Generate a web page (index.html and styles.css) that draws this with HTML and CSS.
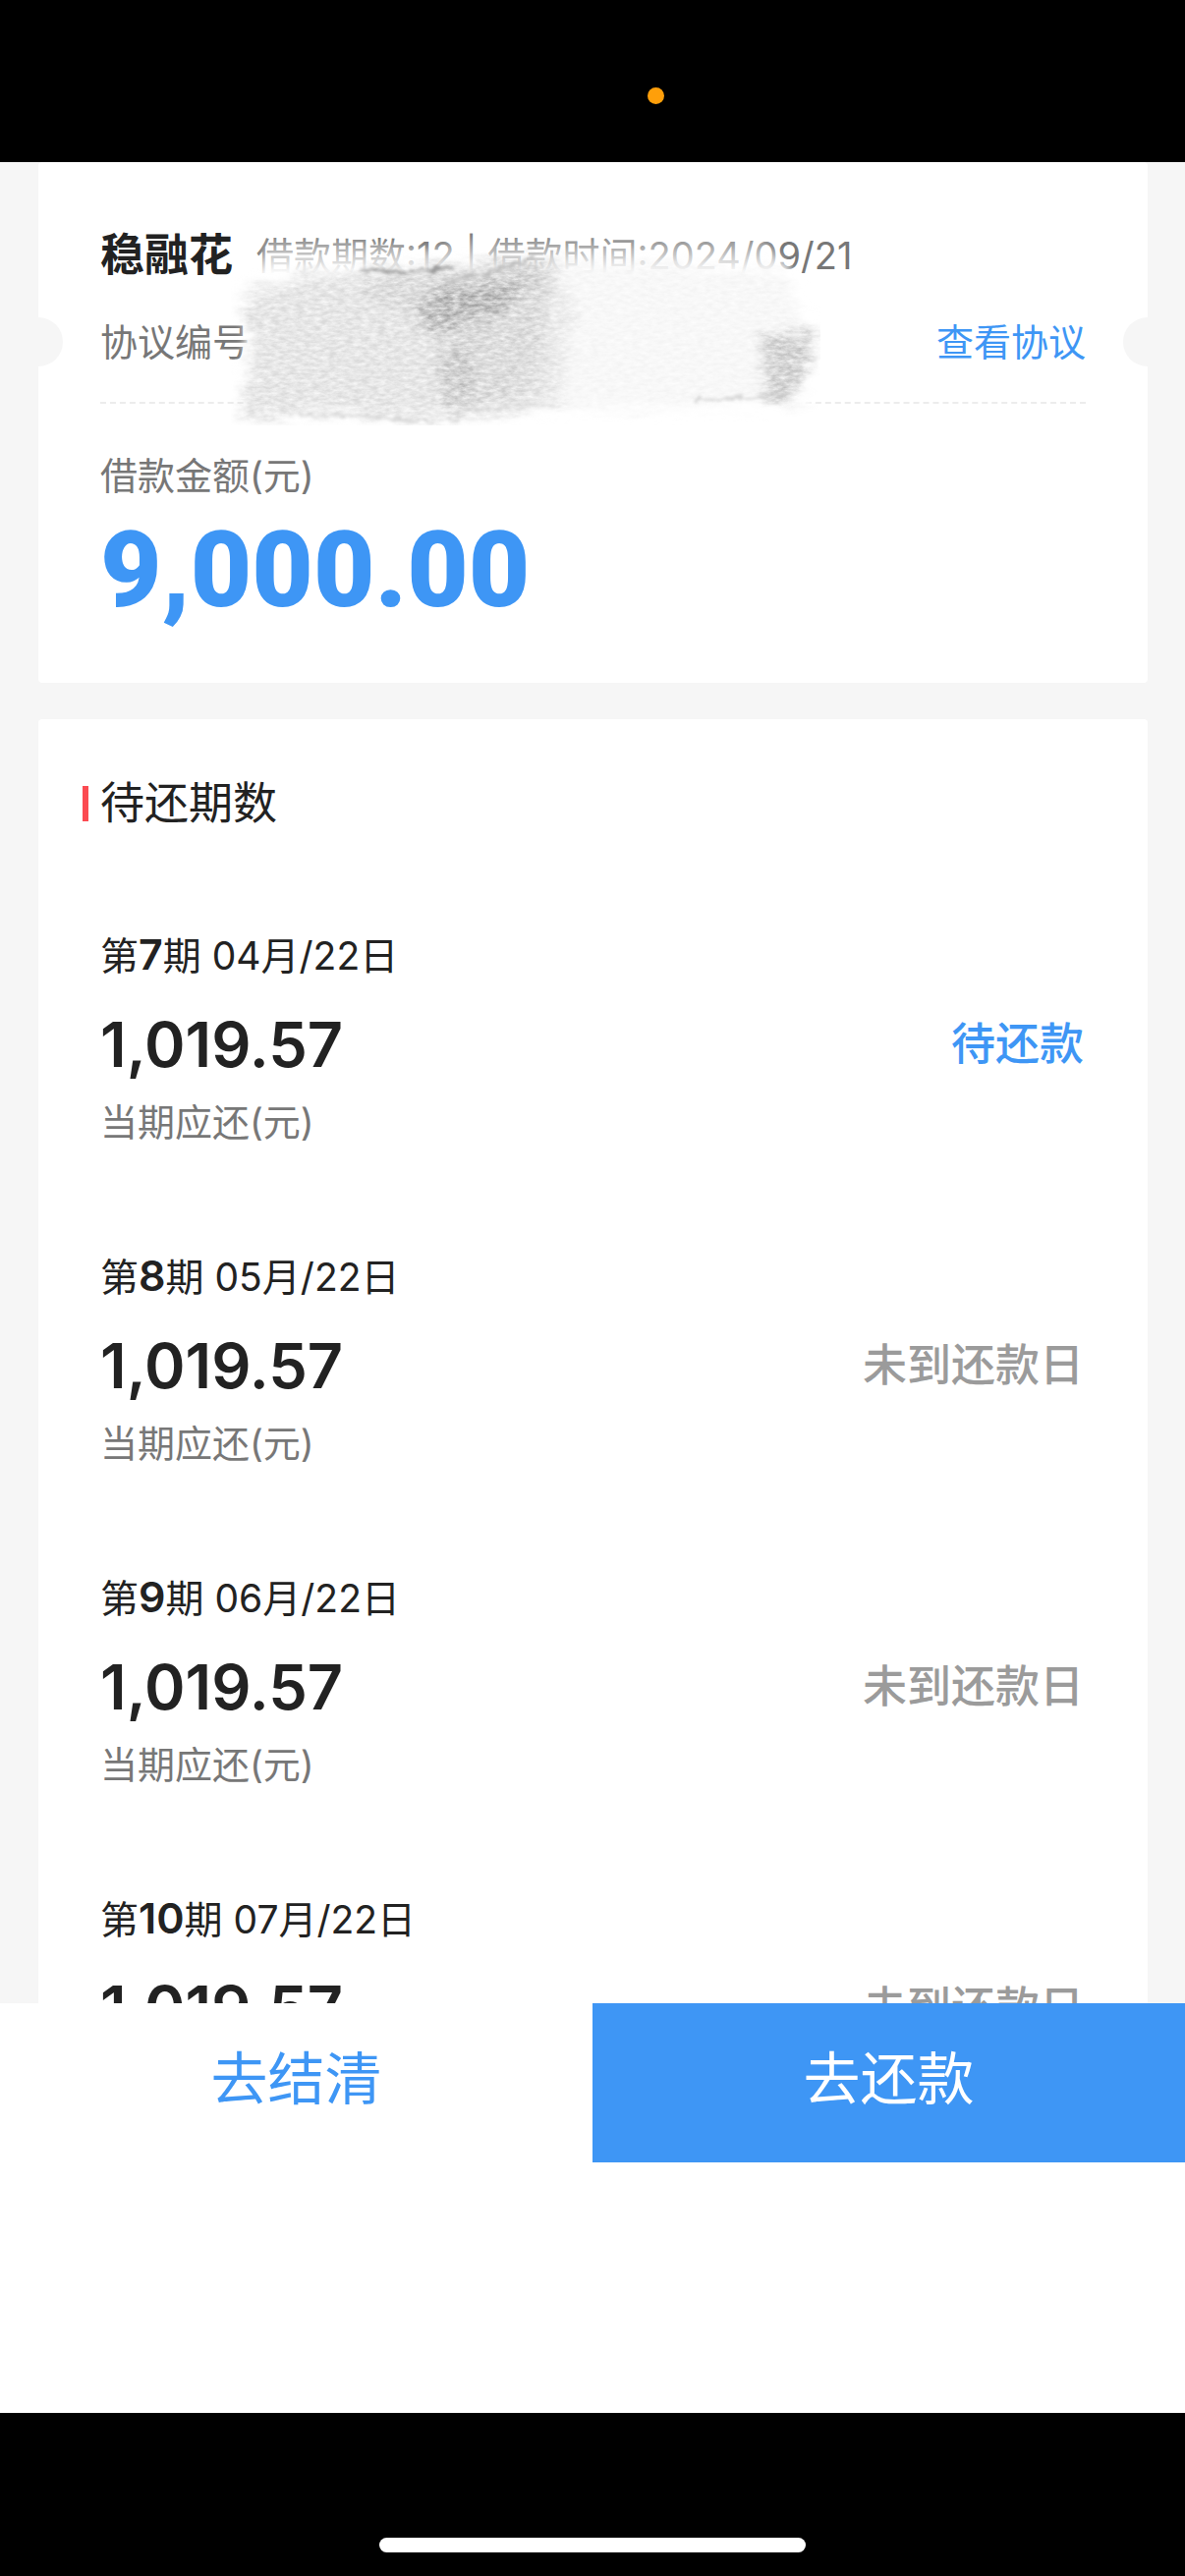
FILE: index.html
```html
<!DOCTYPE html>
<html lang="zh-CN">
  <head>
    <meta charset="UTF-8" />
    <meta name="viewport" content="width=device-width, initial-scale=1.0" />
    <title>借款详情</title>
    <link rel="stylesheet" href="styles.css">
  </head>

  <body>
    <div class="status-bar"><span class="mic-dot"></span></div>

    <main class="content">
      <section class="card loan">
        <div class="loan-head">
          <h1>稳融花</h1>
          <span class="loan-meta">借款期数:12 | 借款时间:2024/09/21</span>
        </div>
        <div class="loan-number">
          <span>协议编号:</span>
          <a href="#agreement">查看协议</a>
        </div>
        <div class="loan-label">借款金额(元)</div>
        <div class="loan-amount">9,000.00</div>

        <!-- hides the agreement number -->
        <svg class="smudge" viewBox="0 0 600 200" aria-hidden="true">
          <defs>
            <linearGradient id="fade" x1="0" y1="0" x2="0" y2="1">
              <stop offset="0" stop-color="#fff" stop-opacity="0" />
              <stop offset="0.22" stop-color="#fff" />
              <stop offset="1" stop-color="#fff" />
            </linearGradient>
            <filter id="soft" x="-10%" y="-30%" width="120%" height="160%">
              <feGaussianBlur stdDeviation="4" />
            </filter>
            <filter id="chalk" x="-5%" y="-15%" width="110%" height="130%">
              <feTurbulence type="fractalNoise" baseFrequency="0.03 0.08" numOctaves="3" seed="4" result="wave" />
              <feTurbulence type="fractalNoise" baseFrequency="0.12 0.3" numOctaves="4" seed="9" result="noise" />
              <feGaussianBlur in="SourceGraphic" stdDeviation="7" result="blurred" />
              <feDisplacementMap in="blurred" in2="wave" scale="24" xChannelSelector="R" yChannelSelector="G" result="rough" />
              <feColorMatrix in="noise" type="matrix" values="0 0 0 0 0  0 0 0 0 0  0 0 0 0 0  1.2 0 0 0 0.05" result="grain" />
              <feComposite in="rough" in2="grain" operator="in" />
            </filter>
            <filter id="edge" x="-5%" y="-40%" width="110%" height="180%">
              <feTurbulence type="fractalNoise" baseFrequency="0.12" numOctaves="3" seed="2" result="noise" />
              <feDisplacementMap in="SourceGraphic" in2="noise" scale="10" result="rough" />
              <feGaussianBlur in="rough" stdDeviation="1.5" />
            </filter>
          </defs>
          <path fill="url(#fade)" filter="url(#soft)" d="M36 8 L130 10 L200 20 L260 2 L340 2 L540 6 L568 40 L590 90 L590 180 L540 194 L20 195 L14 100 Z" />
          <g filter="url(#chalk)">
            <path fill="#dadada" d="M10 66 L70 48 L140 46 L330 30 L348 80 L334 180 L220 194 L80 188 L8 196 L22 130 Z" />
            <path fill="#ededed" d="M325 32 L560 42 L584 90 L566 172 L440 184 L330 180 Z" opacity="0.6" />
            <path fill="#c6c6c6" d="M132 40 L225 40 L330 28 L322 60 L320 100 L316 130 L300 166 L226 188 L216 120 L200 90 L140 70 Z" opacity="0.7" />
            <path fill="#8c8c8c" d="M186 76 L230 60 L304 44 L284 80 L240 96 L200 106 Z" opacity="0.7" />
            <path fill="#a8a8a8" d="M210 128 L250 118 L240 170 L222 188 Z" opacity="0.6" />
            <path fill="#999" d="M540 108 L598 104 L584 140 L576 176 L544 174 Z" opacity="0.6" />
          </g>
          <g filter="url(#edge)" fill="none" stroke="#bdbdbd" stroke-width="3">
            <path stroke="#8c8c8c" d="M132 42 L180 44 L226 39" opacity="0.8" />
            <path d="M216 54 L262 44 L312 28" />
            <path d="M70 190 L130 190 L206 196" opacity="0.5" />
            <path d="M222 196 L240 184 L328 178" opacity="0.4" />
            <path d="M470 174 L520 172 L572 168" opacity="0.6" />
          </g>
        </svg>
      </section>

      <section class="card plan">
        <h2>待还期数</h2>
        <ul class="periods">
          <li>
            <div class="date">第<b>7</b>期 04月/22日</div>
            <div class="row">
              <span class="amount">1,019.57</span>
              <span class="state due">待还款</span>
            </div>
            <div class="note">当期应还(元)</div>
          </li>
          <li>
            <div class="date">第<b>8</b>期 05月/22日</div>
            <div class="row">
              <span class="amount">1,019.57</span>
              <span class="state">未到还款日</span>
            </div>
            <div class="note">当期应还(元)</div>
          </li>
          <li>
            <div class="date">第<b>9</b>期 06月/22日</div>
            <div class="row">
              <span class="amount">1,019.57</span>
              <span class="state">未到还款日</span>
            </div>
            <div class="note">当期应还(元)</div>
          </li>
          <li>
            <div class="date">第<b>10</b>期 07月/22日</div>
            <div class="row">
              <span class="amount">1,019.57</span>
              <span class="state">未到还款日</span>
            </div>
          </li>
        </ul>
      </section>
    </main>

    <footer class="actions">
      <button type="button" class="settle">去结清</button>
      <button type="button" class="repay">去还款</button>
    </footer>

    <div class="home-bar"><span></span></div>
  </body>
</html>
```

FILE: styles.css
```css
* {
  box-sizing: border-box;
}

body {
  margin: 0;
  height: 100vh;
  display: flex;
  flex-direction: column;
  overflow: hidden;
  background: #fff;
  color: #222;
  font-family: Inter, "Noto Sans CJK SC", sans-serif;
  font-size: 39px;
  line-height: 60px;
}

h1,
h2,
ul {
  margin: 0;
  padding: 0;
}

.status-bar {
  flex: none;
  height: 165px;
  padding: 30px 0 0 129px;
  display: flex;
  align-items: center;
  justify-content: center;
  background: #000;
}

.mic-dot {
  width: 17px;
  height: 17px;
  border-radius: 50%;
  background: #ff9f0a;
}

.content {
  flex: 1;
  min-height: 0;
  overflow: hidden;
  padding: 0 38px 0 39px;
  background: #f6f6f6;
}

.card {
  padding: 0 63px;
  border-radius: 4px;
  background: #fff;
}

.loan {
  position: relative;
  height: 530px;
  padding-top: 65px;
  margin-bottom: 37px;
}

/* ticket notches */
.loan::before,
.loan::after {
  content: "";
  position: absolute;
  top: 158px;
  width: 50px;
  height: 50px;
  border-radius: 50%;
  background: #f6f6f6;
}

.loan::before {
  left: -25px;
}

.loan::after {
  right: -25px;
}

.loan-head {
  display: flex;
  align-items: center;
  gap: 24px;
}

.loan-head h1 {
  font-size: 45px;
  font-weight: 700;
}

.loan-meta,
.loan-label,
.note {
  color: #777;
}

.loan-meta,
.loan-label,
.loan-number,
.note {
  font-size: 38px;
}

.loan-number {
  display: flex;
  justify-content: space-between;
  padding: 28px 0 31px;
  border-bottom: 2px dashed #ececec;
  color: #777;
}

.loan-number a {
  color: #3e96f5;
  text-decoration: none;
}

.loan-label {
  margin-top: 43px;
}

.loan-amount {
  color: #3e96f5;
  font-family: Roboto, sans-serif;
  font-size: 108px;
  font-weight: 900;
  line-height: 132px;
}

.smudge {
  position: absolute;
  top: 68px;
  left: 196px;
  width: 600px;
  height: 200px;
}

.plan {
  padding-top: 56px;
}

.plan h2 {
  display: flex;
  align-items: center;
  gap: 12px;
  margin-left: -18px;
  font-size: 45px;
  font-weight: 400;
}

.plan h2::before {
  content: "";
  width: 6px;
  height: 36px;
  background: #fb4b52;
}

.periods {
  list-style: none;
  padding-top: 95px;
}

.periods li {
  height: 327px;
}

.date b {
  font-size: 43px;
  font-weight: 600;
  line-height: 1;
}

.row {
  display: flex;
  align-items: center;
  justify-content: space-between;
  height: 120px;
  padding-right: 2px;
}

.amount {
  font-size: 63px;
  font-weight: 600;
}

.state {
  color: #9b9b9b;
  font-size: 45px;
  font-weight: 500;
}

.state.due {
  color: #3e96f5;
}

.note {
  margin-top: -11px;
}

.actions {
  flex: none;
  display: flex;
  height: 417px;
  align-items: flex-start;
}

.actions button {
  flex: 1;
  height: 162px;
  padding: 0 0 8px;
  border: 0;
  font: inherit;
  font-size: 58px;
}

.settle {
  background: #fff;
  color: #3e96f5;
}

.repay {
  background: #3e96f5;
  color: #fff;
}

.home-bar {
  flex: none;
  display: flex;
  justify-content: center;
  align-items: flex-end;
  height: 166px;
  padding-bottom: 24px;
  background: #000;
}

.home-bar span {
  width: 36%;
  height: 15px;
  border-radius: 8px;
  background: #fff;
}
```
